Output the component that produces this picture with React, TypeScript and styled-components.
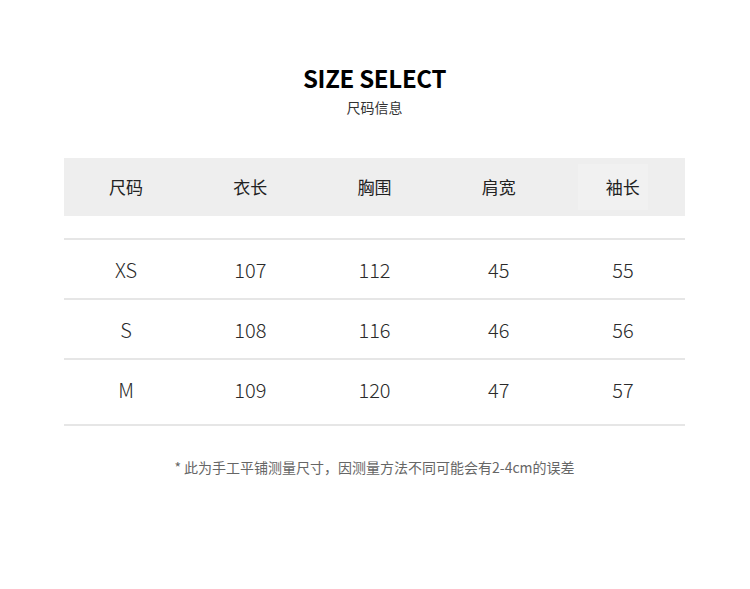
import React from "react";
import styled, { createGlobalStyle } from "styled-components";

const Global = createGlobalStyle`
  html, body { margin: 0; padding: 0; background: #fff; }
  body { font-family: "Noto Sans CJK SC", "Noto Sans", sans-serif; }
`;

const Page = styled.div`
  width: 750px;
  height: 589px;
  box-sizing: border-box;
  padding: 62px 65px 0 64px;
  display: flex;
  flex-direction: column;
  align-items: stretch;
`;

const Title = styled.h1`
  margin: 0;
  text-align: center;
  font-family: "Noto Sans CJK SC", "Noto Sans", sans-serif;
  font-weight: 700;
  font-size: 24px;
  line-height: 32px;
  letter-spacing: -0.3px;
  color: #000;
`;

const Subtitle = styled.div`
  text-align: center;
  font-size: 14px;
  line-height: 18px;
  color: #333;
  margin-top: 4px;
`;

const HeaderRow = styled.div`
  margin-top: 42px;
  height: 58px;
  background: #eeeeee;
  display: grid;
  grid-template-columns: repeat(5, 1fr);
  align-items: center;
`;

const HeadCell = styled.div<{ $hl?: boolean }>`
  box-sizing: border-box;
  font-size: 17px;
  color: #222;
  height: 46px;
  line-height: 46px;
  text-align: ${(p) => (p.$hl ? "left" : "center")};
  justify-self: ${(p) => (p.$hl ? "start" : "stretch")};
  width: ${(p) => (p.$hl ? "70px" : "auto")};
  margin-left: ${(p) => (p.$hl ? "17px" : "0")};
  padding-left: ${(p) => (p.$hl ? "28px" : "0")};
  background: ${(p) => (p.$hl ? "#f1f1f1" : "transparent")};
`;

const Body = styled.div`
  margin-top: 22px;
  border-top: 2px solid #e6e6e6;
`;

const Row = styled.div<{ $h: number; $pb: number }>`
  box-sizing: content-box;
  height: ${(p) => p.$h - p.$pb}px;
  padding-bottom: ${(p) => p.$pb}px;
  display: grid;
  grid-template-columns: repeat(5, 1fr);
  align-items: center;
  border-bottom: 2px solid #e6e6e6;
`;

const Cell = styled.div`
  text-align: center;
  font-size: 20px;
  font-weight: 300;
  color: #2a2a2a;
`;

const Note = styled.div`
  margin-top: 31px;
  text-align: center;
  font-size: 14px;
  line-height: 20px;
  color: #666;
`;

const heads = ["尺码", "衣长", "胸围", "肩宽", "袖长"];
const rows = [
  { h: 58, pb: 0, v: ["XS", "107", "112", "45", "55"] },
  { h: 58, pb: 0, v: ["S", "108", "116", "46", "56"] },
  { h: 64, pb: 6, v: ["M", "109", "120", "47", "57"] },
];

export default function App() {
  return (
    <>
      <Global />
      <Page>
        <Title>SIZE SELECT</Title>
        <Subtitle>尺码信息</Subtitle>
        <HeaderRow>
          {heads.map((h, i) => (
            <HeadCell key={h} $hl={i === 4}>
              {h}
            </HeadCell>
          ))}
        </HeaderRow>
        <Body>
          {rows.map((r) => (
            <Row key={r.v[0]} $h={r.h} $pb={r.pb}>
              {r.v.map((c, i) => (
                <Cell key={i}>{c}</Cell>
              ))}
            </Row>
          ))}
        </Body>
        <Note>* 此为手工平铺测量尺寸，因测量方法不同可能会有2-4cm的误差</Note>
      </Page>
    </>
  );
}
